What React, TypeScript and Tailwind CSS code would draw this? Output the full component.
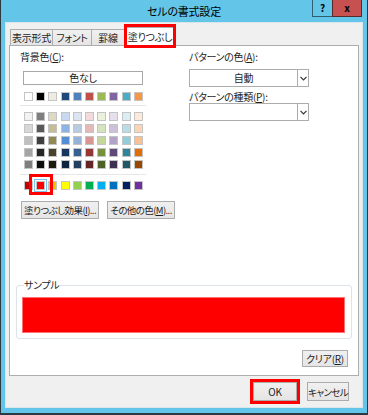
import React from 'react';

const font = "font-['Noto_Sans_CJK_JP',sans-serif] [font-feature-settings:'palt']";

const topRow = ['bg-[#ffffff]', 'bg-[#000000]', 'bg-[#eeece1]', 'bg-[#1f497d]', 'bg-[#4f81bd]', 'bg-[#c0504d]', 'bg-[#9bbb59]', 'bg-[#8064a2]', 'bg-[#4bacc6]', 'bg-[#f79646]'];

const tintRows = [
  ['bg-[#f2f2f2]', 'bg-[#7f7f7f]', 'bg-[#ddd9c3]', 'bg-[#c6d9f0]', 'bg-[#dbe5f1]', 'bg-[#f2dcdb]', 'bg-[#ebf1dd]', 'bg-[#e5e0ec]', 'bg-[#dbeef3]', 'bg-[#fdeada]'],
  ['bg-[#d8d8d8]', 'bg-[#595959]', 'bg-[#c4bd97]', 'bg-[#8db3e2]', 'bg-[#b8cce4]', 'bg-[#e5b9b7]', 'bg-[#d7e3bc]', 'bg-[#ccc1d9]', 'bg-[#b7dde8]', 'bg-[#fbd5b5]'],
  ['bg-[#bfbfbf]', 'bg-[#3f3f3f]', 'bg-[#938953]', 'bg-[#548dd4]', 'bg-[#95b3d7]', 'bg-[#d99694]', 'bg-[#c3d69b]', 'bg-[#b2a2c7]', 'bg-[#92cddc]', 'bg-[#fac08f]'],
  ['bg-[#a5a5a5]', 'bg-[#262626]', 'bg-[#494429]', 'bg-[#17365d]', 'bg-[#366092]', 'bg-[#953734]', 'bg-[#76923c]', 'bg-[#5f497a]', 'bg-[#31859b]', 'bg-[#e36c09]'],
  ['bg-[#7f7f7f]', 'bg-[#0c0c0c]', 'bg-[#1d1b10]', 'bg-[#0f243e]', 'bg-[#244061]', 'bg-[#632423]', 'bg-[#4f6128]', 'bg-[#3f3151]', 'bg-[#205867]', 'bg-[#974806]'],
];

const standard = ['bg-[#c00000]', 'bg-[#ff0000]', 'bg-[#ffc000]', 'bg-[#ffff00]', 'bg-[#92d050]', 'bg-[#00b050]', 'bg-[#00b0f0]', 'bg-[#0070c0]', 'bg-[#002060]', 'bg-[#7030a0]'];

const btn = 'flex items-center justify-center whitespace-nowrap border border-[#acacac] bg-linear-to-b from-[#f0f0f0] to-[#e5e5e5] text-[#1e1e1e]';
const tab = 'h-[16px] border-t border-l border-[#acacac] bg-linear-to-b from-[#f0f0f0] to-[#e5e5e5] flex items-center justify-center whitespace-nowrap';

const Swatch = ({ color }: { color: string }) => (
  <div className={`w-[9px] h-[9px] border border-[#c4c4c4] ${color}`} />
);

const SwatchRow = ({ colors, selected }: { colors: string[]; selected?: number }) => (
  <div className="flex gap-[3.2px]">
    {colors.map((c, i) =>
      i === selected ? (
        <div key={i} className="relative">
          <Swatch color={c} />
          <div className="absolute -inset-[2px] border border-[#7fc3ea]" />
          <div className="absolute -left-[7px] -top-[7px] w-[24px] h-[21px] border-[3px] border-[#ff0000]" />
        </div>
      ) : (
        <Swatch key={i} color={c} />
      )
    )}
  </div>
);

const Chevron = () => (
  <svg width="7" height="5" viewBox="0 0 7 5">
    <path d="M0.5 0.8 L3.5 3.8 L6.5 0.8" fill="none" stroke="#333" strokeWidth="1.2" />
  </svg>
);

const Dropdown = ({ value }: { value?: string }) => (
  <div className="flex w-[120px] h-[18px] border border-[#acacac] bg-white">
    <div className="flex-1 flex items-center justify-center">{value}</div>
    <div className="w-[11px] border-l border-[#acacac] flex items-center justify-center">
      <Chevron />
    </div>
  </div>
);

export default function App() {
  return (
    <div className={`w-[368px] h-[415px] bg-[#63c6e8] border-x border-b-2 border-[#2a3a40] flex flex-col ${font} text-[10px] leading-[12px] tracking-[-0.3px] text-[#1e1e1e]`}>
      {/* title bar */}
      <div className="h-[22px] grid grid-cols-[1fr_auto_1fr]">
        <div />
        <div className="text-[11px] leading-[23px] tracking-[-0.2px] text-black">セルの書式設定</div>
        <div className="flex justify-end items-start pr-[5px]">
          <div className="w-[20px] h-[17px] border-l border-b border-[#2f5f70] flex items-center justify-center font-bold text-[10px] text-black">?</div>
          <div className="w-[30px] h-[17px] bg-[#c75050] border-x border-b border-[#5a2a2a] flex items-center justify-center font-bold text-[10px] text-black">x</div>
        </div>
      </div>

      {/* client area */}
      <div className="mx-[4px] mb-[5px] flex-1 bg-[#f0f0f0] border border-[#d9e6ec] px-[3px] pt-[4px] flex flex-col">
        {/* tabs */}
        <div className="h-[18px] flex items-end pl-[1px]">
          <div className={`${tab} w-[42px]`}>表示形式</div>
          <div className={`${tab} w-[39px]`}>フォント</div>
          <div className={`${tab} w-[34px] border-r`}>罫線</div>
          <div className="relative z-10 ml-[1px] -mb-[1px] w-[48px] h-[19px] bg-white border-x border-t border-[#acacac] flex items-center justify-center whitespace-nowrap">
            塗りつぶし
            <div className="absolute -left-[3px] -right-[3px] -top-[4px] -bottom-[2px] border-[3px] border-[#ff0000]" />
          </div>
        </div>

        {/* panel */}
        <div className="bg-white border border-[#adadad] px-[6px] pb-[8px] flex flex-col">
          <div className="flex pl-[4px] pt-[5px]">
            {/* left column */}
            <div className="w-[169px] flex flex-col">
              <div>背景色(<u>C</u>):</div>
              <div className="mt-[8px] ml-[3px] w-[120px] h-[14px] border border-[#a8a8a8] bg-white flex items-center justify-center">色なし</div>
              <div className="mt-[7px] ml-[4px]">
                <SwatchRow colors={topRow} />
              </div>
              <div className="mt-[4px] h-px w-[126px] bg-[#e6e6e6]" />
              <div className="mt-[6px] ml-[4px] flex flex-col gap-[3px]">
                {tintRows.map((r, i) => (
                  <SwatchRow key={i} colors={r} />
                ))}
              </div>
              <div className="mt-[5px] h-px w-[126px] bg-[#e6e6e6]" />
              <div className="mt-[6px] ml-[4px]">
                <SwatchRow colors={standard} selected={1} />
              </div>
              <div className="mt-[11px] ml-[1px] flex gap-[8px] text-[9.5px] tracking-[-0.6px]">
                <div className={`${btn} w-[78px] h-[18px]`}>塗りつぶし効果(<u>I</u>)...</div>
                <div className={`${btn} w-[68px] h-[18px]`}>その他の色(<u>M</u>)...</div>
              </div>
            </div>

            {/* right column */}
            <div className="flex flex-col">
              <div>パターンの色(<u>A</u>):</div>
              <div className="mt-[6px]">
                <Dropdown value="自動" />
              </div>
              <div className="mt-[4px]">パターンの種類(<u>P</u>):</div>
              <Dropdown />
            </div>
          </div>

          {/* sample */}
          <fieldset className="mt-[60px] border border-[#dde3ea] rounded-[3px] pl-[5px] pr-[6px] pt-[6px] pb-[5px]">
            <legend className="ml-[2px]">サンプル</legend>
            <div className="h-[36px] bg-[#ff0000] border border-[#ff7070]" />
          </fieldset>

          <div className="mt-[11px] self-end mr-[4px]">
            <div className={`${btn} w-[46px] h-[17px]`}>クリア(<u>R</u>)</div>
          </div>
        </div>

        {/* dialog buttons */}
        <div className="mt-[6px] flex justify-end gap-[10px] pr-[10px]">
          <div className="relative">
            <div className={`${btn} w-[44px] h-[19px]`}>OK</div>
            <div className="absolute -inset-[3px] border-[3px] border-[#ff0000]" />
          </div>
          <div className={`${btn} w-[42px] h-[19px] text-[9.5px] tracking-[-0.6px]`}>キャンセル</div>
        </div>
      </div>
    </div>
  );
}
